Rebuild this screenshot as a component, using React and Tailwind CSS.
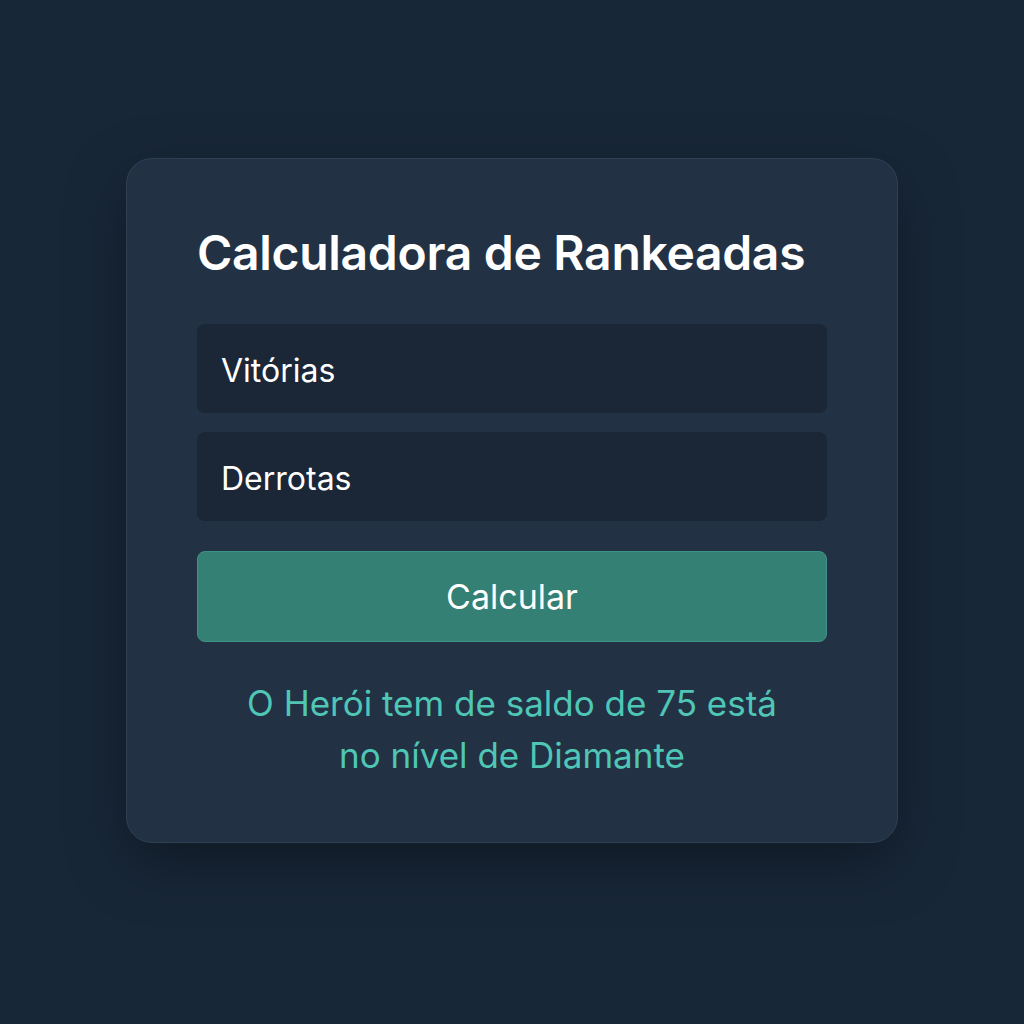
export default function App() {
	return (
		<div className="min-h-screen w-full bg-[#182738] flex items-start justify-center pt-[158px] font-['Inter',sans-serif]">
			<div className="w-[772px] h-[685px] bg-[#223244] border border-[#2f4052] rounded-[26px] shadow-[0_20px_60px_rgba(0,0,0,0.35)] px-[70px] pt-[64px]">
				{/* Title */}
				<h1 className="text-[48px] font-semibold text-white leading-[60px] tracking-[-0.3px]">
					Calculadora de Rankeadas
				</h1>

				{/* Inputs */}
				<div className="mt-[41px] flex flex-col gap-[19px]">
					<input
						placeholder="Vitórias"
						className="h-[89px] w-full rounded-lg bg-[#1b2636] px-[24px] pt-[4px] text-[32px] text-white placeholder:text-white outline-none"
					/>
					<input
						placeholder="Derrotas"
						className="h-[89px] w-full rounded-lg bg-[#1b2636] px-[24px] pt-[4px] text-[32px] text-white placeholder:text-white outline-none"
					/>
				</div>

				{/* Button */}
				<button className="mt-[30px] h-[91px] w-full rounded-lg bg-[#358075] border border-[#3f9386] text-[34px] text-white">
					Calcular
				</button>

				{/* Result */}
				<p className="mt-[35px] text-center text-[35px] leading-[52px] text-[#4fc6b6]">
					O Herói tem de saldo de 75 está
					<br />
					no nível de Diamante
				</p>
			</div>
		</div>
	);
}
